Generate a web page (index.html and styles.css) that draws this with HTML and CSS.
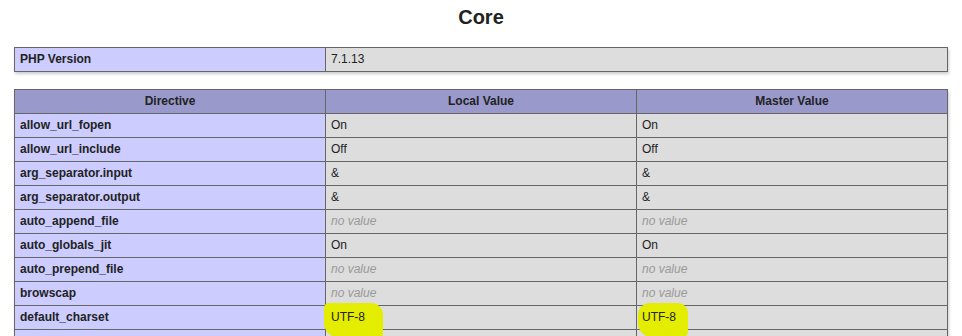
FILE: index.html
```html
<!DOCTYPE html>
<html>
<head>
<meta charset="utf-8">
<title>phpinfo()</title>
<link rel="stylesheet" href="styles.css">
</head>
<body>
<div class="center">
<h2>Core</h2>
<table class="info">
<tr><td class="e">PHP Version </td><td class="v">7.1.13 </td></tr>
</table>
<table class="info">
<tr class="h"><th>Directive</th><th>Local Value</th><th>Master Value</th></tr>
<tr><td class="e">allow_url_fopen</td><td class="v">On</td><td class="v">On</td></tr>
<tr><td class="e">allow_url_include</td><td class="v">Off</td><td class="v">Off</td></tr>
<tr><td class="e">arg_separator.input</td><td class="v">&amp;</td><td class="v">&amp;</td></tr>
<tr><td class="e">arg_separator.output</td><td class="v">&amp;</td><td class="v">&amp;</td></tr>
<tr><td class="e">auto_append_file</td><td class="v"><i>no value</i></td><td class="v"><i>no value</i></td></tr>
<tr><td class="e">auto_globals_jit</td><td class="v">On</td><td class="v">On</td></tr>
<tr><td class="e">auto_prepend_file</td><td class="v"><i>no value</i></td><td class="v"><i>no value</i></td></tr>
<tr><td class="e">browscap</td><td class="v"><i>no value</i></td><td class="v"><i>no value</i></td></tr>
<tr><td class="e">default_charset</td><td class="v"><span class="mark mark-a">UTF-8</span></td><td class="v"><span class="mark mark-b">UTF-8</span></td></tr>
<tr><td class="e">default_mimetype</td><td class="v">text/html</td><td class="v">text/html</td></tr>
</table>
</div>
</body>
</html>
```
FILE: styles.css
```css
html, body {
  margin: 0;
  padding: 0;
  background: #fff;
}
body {
  color: #222;
  font-family: "Liberation Sans", Arial, sans-serif;
}
.center {
  text-align: center;
}
h2 {
  font-size: 20px;
  line-height: 23px;
  font-weight: bold;
  margin: 6px 0 18px;
}
table.info {
  border-collapse: collapse;
  border: 0;
  width: 934px;
  margin: 0 auto 17px;
  text-align: left;
  box-shadow: 1px 2px 3px #ccc;
}
td, th {
  border: 1px solid #666;
  font-size: 12px;
  line-height: 15px;
  vertical-align: baseline;
  padding: 4px 5px;
}
th {
  text-align: center;
}
.h {
  background-color: #99c;
  font-weight: bold;
}
.h th {
  width: 300px;
}
.e {
  background-color: #ccf;
  width: 300px;
  font-weight: bold;
}
.v {
  background-color: #ddd;
  word-wrap: break-word;
}
.v i {
  color: #999;
}
.mark {
  position: relative;
  isolation: isolate;
  display: inline-block;
}
.mark::before {
  content: "";
  position: absolute;
  z-index: -1;
  background: #e4ec00;
  top: -7px;
  height: 34px;
}
.mark-a::before {
  left: -7px;
  width: 59px;
  border-radius: 5px 12px 4px 14px;
}
.mark-b::before {
  left: -4px;
  width: 50px;
  border-radius: 12px 10px 5px 14px;
}
```
